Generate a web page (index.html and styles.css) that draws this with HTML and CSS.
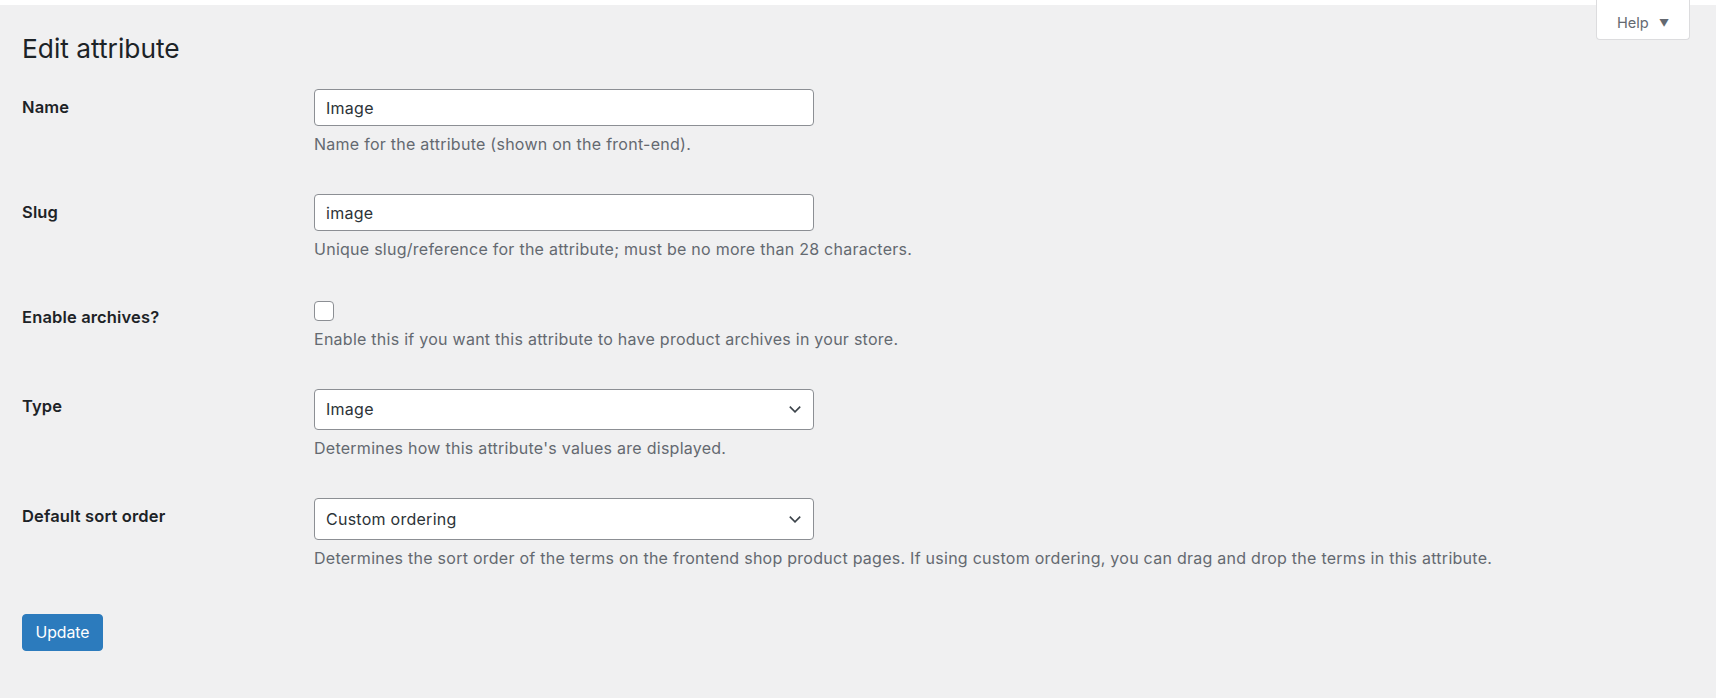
FILE: index.html
```html
<!DOCTYPE html>
<html lang="en">
<head>
<meta charset="utf-8">
<title>Edit attribute</title>
<link rel="stylesheet" href="styles.css">
</head>
<body>
<div class="topbar"></div>
<button class="help-tab" type="button">Help <span class="help-arrow">&#9660;</span></button>
<main class="wrap">
  <h1 class="title">Edit attribute</h1>
  <form class="form-table">
    <div class="form-row">
      <div class="th"><label for="attr-name">Name</label></div>
      <div class="td">
        <input id="attr-name" class="text-input" type="text" value="Image">
        <p class="description">Name for the attribute (shown on the front-end).</p>
      </div>
    </div>
    <div class="form-row">
      <div class="th"><label for="attr-slug">Slug</label></div>
      <div class="td">
        <input id="attr-slug" class="text-input" type="text" value="image">
        <p class="description">Unique slug/reference for the attribute; must be no more than 28 characters.</p>
      </div>
    </div>
    <div class="form-row">
      <div class="th"><label for="attr-public">Enable archives?</label></div>
      <div class="td">
        <span class="checkbox"></span>
        <p class="description">Enable this if you want this attribute to have product archives in your store.</p>
      </div>
    </div>
    <div class="form-row">
      <div class="th"><label>Type</label></div>
      <div class="td">
        <div class="select">
          <span class="select-value">Image</span>
          <svg class="chevron" width="16" height="16" viewBox="0 0 16 16"><path d="M2.8 5.6 L8 10.8 L13.2 5.6" fill="none" stroke="#3c434a" stroke-width="1.6"/></svg>
        </div>
        <p class="description">Determines how this attribute's values are displayed.</p>
      </div>
    </div>
    <div class="form-row">
      <div class="th"><label>Default sort order</label></div>
      <div class="td">
        <div class="select">
          <span class="select-value">Custom ordering</span>
          <svg class="chevron" width="16" height="16" viewBox="0 0 16 16"><path d="M2.8 5.6 L8 10.8 L13.2 5.6" fill="none" stroke="#3c434a" stroke-width="1.6"/></svg>
        </div>
        <p class="description">Determines the sort order of the terms on the frontend shop product pages. If using custom ordering, you can drag and drop the terms in this attribute.</p>
      </div>
    </div>
    <div class="submit">
      <button type="button" class="button-primary">Update</button>
    </div>
  </form>
</main>
</body>
</html>
```

FILE: styles.css
```css
html, body {
  margin: 0;
  padding: 0;
}
body {
  background: #f0f0f1;
  font-family: Inter, "Liberation Sans", Arial, sans-serif;
  font-size: 16px;
  color: #3c434a;
  height: 698px;
  overflow: hidden;
  position: relative;
}
.topbar {
  height: 5px;
  background: #ffffff;
}
.help-tab {
  position: absolute;
  top: -1px;
  right: 26px;
  width: 94px;
  height: 41px;
  background: #ffffff;
  border: 1px solid #dcdcde;
  border-top: none;
  border-radius: 0 0 4px 4px;
  font-family: inherit;
  font-size: 14.6px;
  color: #646970;
  padding: 8px 0 0;
  cursor: pointer;
}
.help-arrow {
  font-size: 10px;
  margin-left: 6px;
  position: relative;
  top: -1px;
}
.wrap {
  padding-left: 22px;
}
.title {
  margin: 27px 0 7px;
  font-size: 26.3px;
  font-weight: 400;
  line-height: 33px;
  color: #1d2327;
}
.form-row {
  display: grid;
  grid-template-columns: 292px 1fr;
  align-items: start;
}
.th {
  padding-top: 24.5px;
}
.th label {
  display: block;
  font-weight: 600;
  font-size: 16.5px;
  letter-spacing: 0.15px;
  line-height: 20px;
  color: #1d2327;
}
.td {
  padding: 17px 0 21px;
}
.text-input {
  display: block;
  box-sizing: border-box;
  width: 500px;
  height: 37px;
  margin: 0;
  padding: 0 11px;
  border: 1px solid #8c8f94;
  border-radius: 4px;
  background: #fff;
  font-family: inherit;
  font-size: 16px;
  letter-spacing: 0.26px;
  color: #2c3338;
  outline: none;
}
.checkbox {
  display: block;
  box-sizing: border-box;
  width: 19.5px;
  height: 19.5px;
  margin-top: 2px;
  border: 1px solid #8c8f94;
  border-radius: 4px;
  background: #fff;
}
.select {
  box-sizing: border-box;
  width: 500px;
  height: 41.5px;
  border: 1px solid #8c8f94;
  border-radius: 4px;
  background: #fff;
  display: flex;
  align-items: center;
  justify-content: space-between;
  padding: 0 10px 0 11px;
  color: #2c3338;
  letter-spacing: 0.26px;
}
.chevron {
  display: block;
}
.description {
  margin: 7px 0 0;
  line-height: 23px;
  color: #646970;
  font-size: 16px;
  letter-spacing: 0.26px;
}
.submit {
  padding-top: 23px;
}
.button-primary {
  box-sizing: border-box;
  width: 81px;
  height: 37px;
  border: 1px solid #2c7bbd;
  border-radius: 4px;
  background: #2c7bbd;
  color: #ffffff;
  font-family: inherit;
  font-size: 15.8px;
  padding: 0;
  cursor: pointer;
}
```
